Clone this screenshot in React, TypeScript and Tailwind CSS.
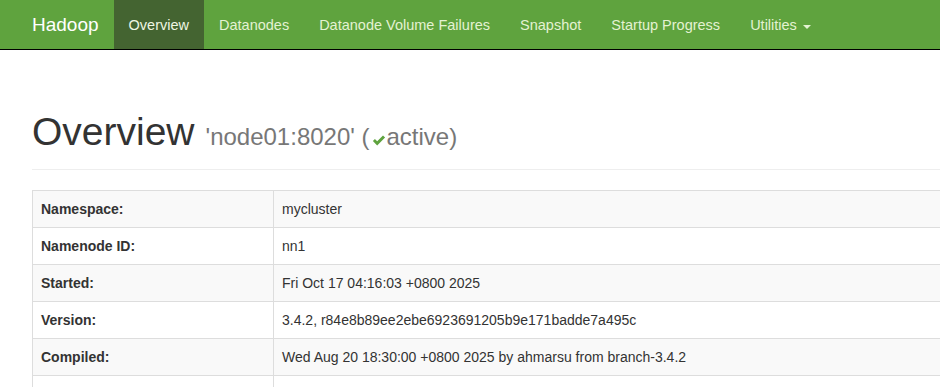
import React from "react";

const navLinks = ["Datanodes", "Datanode Volume Failures", "Snapshot", "Startup Progress"];

const rows: [string, string][] = [
    ["Namespace:", "mycluster"],
    ["Namenode ID:", "nn1"],
    ["Started:", "Fri Oct 17 04:16:03 +0800 2025"],
    ["Version:", "3.4.2, r84e8b89ee2ebe6923691205b9e171badde7a495c"],
    ["Compiled:", "Wed Aug 20 18:30:00 +0800 2025 by ahmarsu from branch-3.4.2"],
    ["", ""],
];

const App = () => {
    return (
        <div className="w-[940px] h-[387px] overflow-hidden bg-white text-[#333] font-['Liberation_Sans',Arial,sans-serif]">
            <nav className="h-[50px] bg-[#5fa33e] border-b border-black flex items-stretch pl-[32px] pt-[2px] text-[14.5px]">
                <a className="flex items-center pr-[15px] text-[19px] text-white">Hadoop</a>
                <a className="flex items-center px-[15px] -mt-[2px] pt-[2px] bg-[#446431] text-[#eef6e2]">Overview</a>
                {navLinks.map((l) => (
                    <a key={l} className="flex items-center px-[15px] text-[#e4f2d2]">{l}</a>
                ))}
                <a className="flex items-center px-[15px] text-[#e4f2d2] gap-[6px]">
                    Utilities
                    <span className="inline-block w-0 h-0 border-x-[4px] border-x-transparent border-t-[4px] border-t-[#e4f2d2] mt-[2px]" />
                </a>
            </nav>

            <div className="pl-[32px] w-[1200px]">
                <div className="mt-[60px] pb-[14px] border-b border-[#eee] flex items-baseline gap-[11px]">
                    <h1 className="text-[39px] leading-[44px] text-[#333]">Overview</h1>
                    <span className="text-[24px] text-[#777] flex items-baseline">
                        'node01:8020' (
                        <svg viewBox="0 0 16 16" className="w-[15px] h-[15px] mx-[1px] self-center mt-[6px]" fill="#5fa33e">
                            <path d="M2 8.5 L4.2 6.4 L6.6 8.8 L12.8 2.6 L15 4.8 L6.6 13.2 Z" />
                        </svg>
                        active)
                    </span>
                </div>

                <table className="mt-[20px] w-[1140px] border border-[#ddd] border-collapse text-[14px]">
                    <tbody>
                        {rows.map(([k, v], i) => (
                            <tr key={i} className={i % 2 === 0 ? "bg-[#f9f9f9]" : "bg-white"}>
                                <th className="w-[241px] text-left font-bold border border-[#ddd] px-[8px] h-[37px]">{k}</th>
                                <td className="border border-[#ddd] px-[8px] h-[37px]">{v}</td>
                            </tr>
                        ))}
                    </tbody>
                </table>
            </div>
        </div>
    );
};

export default App;
